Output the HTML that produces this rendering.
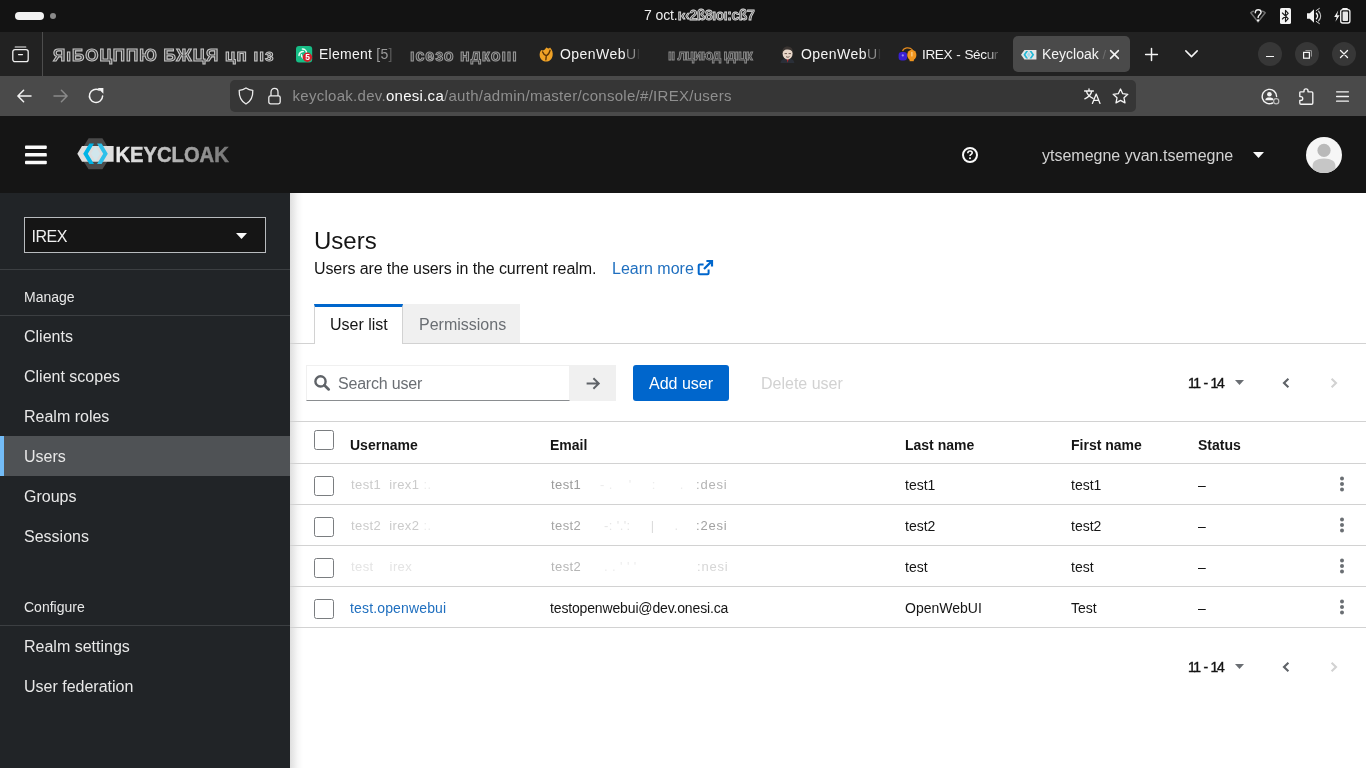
<!DOCTYPE html>
<html lang="en">
<head>
<meta charset="utf-8">
<title>Keycloak Administration Console</title>
<style>
*{box-sizing:border-box;margin:0;padding:0}
html,body{width:1366px;height:768px;overflow:hidden;background:#fff;font-family:"Liberation Sans",sans-serif;}
body{position:relative}
.abs{position:absolute}
#root{left:0;top:0;width:1366px;height:768px;will-change:transform}
svg{display:block;overflow:visible}
/* ---------- GNOME top bar ---------- */
#gnome{left:0;top:0;width:1366px;height:32px;background:#131313}
#gnome .pill{left:15px;top:12px;width:29px;height:8px;border-radius:4px;background:#f2f2f2}
#gnome .dot{left:50px;top:13px;width:6px;height:6px;border-radius:3px;background:#8a8a8a}
#clock{left:644px;top:7px;font-size:14px;color:#f0f0f0;white-space:nowrap;letter-spacing:-.1px}
/* ---------- Firefox tab bar ---------- */
#tabbar{left:0;top:32px;width:1366px;height:44px;background:#222222}
#tabsep{left:42px;top:32px;width:1px;height:44px;background:#4d4d4d}
.tab{top:37px;height:35px;color:#f4f4f4;font-size:14px;white-space:nowrap;line-height:35px}
.tabtxt{overflow:hidden}
#seltab{left:1013px;top:36px;width:117px;height:36px;border-radius:5px;background:#4a4a4a}
.wbtn{top:42px;width:24px;height:24px;border-radius:12px;background:#373737}
/* ---------- Firefox nav bar ---------- */
#navbar{left:0;top:76px;width:1366px;height:40px;background:#4a4a4a}
#urlbar{left:230px;top:80px;width:906px;height:32px;border-radius:5px;background:#363636}
#url{left:292.5px;top:87px;font-size:15px;color:#8f8f8f;white-space:nowrap;line-height:18px;letter-spacing:.28px}
/* ---------- Keycloak header ---------- */
#kchead{left:0;top:116px;width:1366px;height:77px;background:#151515}
#uname{left:1042px;top:147px;font-size:16px;line-height:18px;color:#d2d2d2;white-space:nowrap}
/* ---------- Sidebar ---------- */
#side{left:0;top:193px;width:290px;height:575px;background:#212427}
#realm{left:24px;top:217px;width:242px;height:36px;background:#151515;border:1px solid #b8bbbe}
#realm span{position:absolute;left:6.5px;top:9.5px;font-size:16px;line-height:18px;color:#f0f0f0;letter-spacing:-.5px}
.sdiv{left:0;width:290px;height:1px;background:#3c3f42}
.sec{left:24px;font-size:14px;line-height:16px;color:#e8e8e8;white-space:nowrap}
.nav{left:24px;font-size:16px;line-height:18px;color:#e8e8e8;white-space:nowrap}
#navsel{left:0;top:436px;width:290px;height:40px;background:#4f5255}
#navsel i{position:absolute;left:0;top:0;width:4px;height:40px;background:#73bcf7}
/* ---------- Content ---------- */
#main{left:290px;top:193px;width:1076px;height:575px;background:#fff}
#shadow{left:290px;top:193px;width:13px;height:575px;background:linear-gradient(90deg,rgba(3,3,3,.13),rgba(3,3,3,.03) 60%,rgba(3,3,3,0))}
h1{left:314px;top:227px;font-size:24px;line-height:28px;font-weight:400;color:#151515;white-space:nowrap}
#desc{left:314px;top:260px;font-size:16px;line-height:18px;color:#151515;white-space:nowrap;letter-spacing:-.1px}
#learn{left:612px;top:260px;font-size:16px;line-height:18px;color:#1f6fbf;white-space:nowrap}
#tabline{left:290px;top:343px;width:1076px;height:1px;background:#d2d2d2}
#t1{left:314px;top:304px;width:89px;height:40px;background:#fff;border-top:3px solid #0066cc;border-left:1px solid #d2d2d2;border-right:1px solid #d2d2d2}
#t2{left:403px;top:304px;width:117px;height:39px;background:#f0f0f0}
.ttxt{font-size:16px;line-height:18px;white-space:nowrap;top:316px}
#search{left:306px;top:365px;width:264px;height:36px;background:#fff;border:1px solid #f0f0f0;border-bottom:1px solid #8a8d90}
#sph{left:338px;top:375px;font-size:16px;line-height:18px;color:#6a6e73;white-space:nowrap;letter-spacing:-.2px}
#sbtn{left:570px;top:365px;width:46px;height:36px;background:#f0f0f0}
#add{left:633px;top:365px;width:96px;height:36px;background:#0066cc;border-radius:3px;color:#fff;font-size:16px;line-height:38px;text-align:center;white-space:nowrap}
#del{left:761px;top:375px;font-size:16px;line-height:18px;color:#d2d2d2;white-space:nowrap}
.pg{left:1188px;font-size:14px;line-height:16px;color:#151515;white-space:nowrap;font-weight:400;-webkit-text-stroke:.4px #151515;letter-spacing:-1.4px;word-spacing:1.3px}
.hl{left:290px;width:1076px;height:1px;background:#d2d2d2}
.th{font-size:14px;line-height:16px;font-weight:700;color:#151515;white-space:nowrap;top:437px}
.td{font-size:14px;line-height:16px;color:#151515;white-space:nowrap}
.cb{left:314px;width:20px;height:20px;border:1px solid #7a7d80;border-radius:2.5px;background:#fff}
.scr{color:#5a5a5a;-webkit-text-stroke:.8px #dcdcdc;letter-spacing:-.45px;font-weight:700;filter:blur(.4px)}
.scr1{color:#3c3c3c;-webkit-text-stroke:1.1px #c6c6c6;font-weight:700;font-size:17px;filter:blur(.45px);letter-spacing:1px;line-height:37px}
.scr2{color:#333;-webkit-text-stroke:1px #9c9c9c;font-weight:700;font-size:16px;filter:blur(.5px);letter-spacing:1px;line-height:37px}
.scr3{color:#303030;-webkit-text-stroke:.9px #8c8c8c;font-weight:700;font-size:14px;filter:blur(.5px);letter-spacing:-.75px;line-height:36px}
.rd{font-size:13px;line-height:16px;white-space:nowrap;filter:blur(.35px);letter-spacing:.4px}
</style>
</head>
<body>
<div id="root" class="abs">
<!-- GNOME top bar -->
<div id="gnome" class="abs">
  <div class="pill abs"></div><div class="dot abs"></div>
  <div id="clock" class="abs">7 oct.<span class="scr">&#305;&#8249;&#8249;2&#223;8&#305;o&#305;:c&#223;7</span></div>
  <!-- wifi ? -->
  <svg class="abs" style="left:1250px;top:9px" width="16" height="14" viewBox="0 0 16 14">
    <path d="M3.4 2.2 C2.2 2.6 1.4 3.1 0.8 3.7 L8 12.9 L15.2 3.7 C14.6 3.1 13.8 2.6 12.6 2.2" fill="none" stroke="#707070" stroke-width="1.5" stroke-linejoin="round" stroke-linecap="round"/>
    <path d="M5.3 3.7 C5.3 1.5 6.8 0.7 8.2 0.7 C10 0.7 11.1 1.8 11.1 3.2 C11.1 5.4 8.1 5.6 8.1 8.6" fill="none" stroke="#f2f2f2" stroke-width="1.45" stroke-linecap="round"/>
    <circle cx="8.1" cy="11.4" r="1.15" fill="#f2f2f2"/>
  </svg>
  <!-- bluetooth -->
  <svg class="abs" style="left:1280px;top:8px" width="11" height="16" viewBox="0 0 11 16">
    <rect x="0" y="0" width="11" height="16" rx="1.6" fill="#f4f4f4"/>
    <path d="M2.4 5 L8.2 10.6 L5.5 13.6 L5.5 2.4 L8.2 5.4 L2.4 11" fill="none" stroke="#1c1c1c" stroke-width="1.15" stroke-linejoin="round" stroke-linecap="round"/>
  </svg>
  <!-- volume -->
  <svg class="abs" style="left:1307px;top:8px" width="16" height="16" viewBox="0 0 16 16">
    <path d="M0 5.2 H2.8 L7 1.2 V14.8 L2.8 10.8 H0 Z" fill="#f2f2f2"/>
    <path d="M9.4 5.2 C10.8 6.8 10.8 9.2 9.4 10.8" fill="none" stroke="#f2f2f2" stroke-width="1.3" stroke-linecap="round"/>
    <path d="M11.6 3.2 C14.2 6 14.2 10 11.6 12.8" fill="none" stroke="#bdbdbd" stroke-width="1.3" stroke-linecap="round"/>
    <path d="M9.2 2.6 L12.4 0.4 M9.2 13.4 L12.4 15.6" fill="none" stroke="#d8d8d8" stroke-width="1" stroke-linecap="round"/>
  </svg>
  <!-- battery charging -->
  <svg class="abs" style="left:1334px;top:8px" width="17" height="16" viewBox="0 0 17 16">
    <path d="M4.2 2.4 L0.2 9 H2.7 L1.4 13.8 L5.6 7.2 H3.1 Z" fill="#f4f4f4"/>
    <rect x="8.2" y="0" width="5.6" height="2" rx="0.8" fill="#f2f2f2"/>
    <rect x="6.7" y="1.6" width="9.2" height="13.4" rx="2" fill="none" stroke="#f2f2f2" stroke-width="1.3"/>
    <rect x="8.6" y="3.6" width="5.4" height="9.4" rx="0.8" fill="#e6e6e6"/>
  </svg>
</div>
<!-- Tab bar -->
<div id="tabbar" class="abs"></div>
<div id="tabsep" class="abs"></div>
<!-- firefox view icon -->
<svg class="abs" style="left:12px;top:46px" width="17" height="17" viewBox="0 0 17 17">
  <path d="M3.2 1 H13.8" stroke="#f0f0f0" stroke-width="1.2" fill="none" stroke-linecap="round"/>
  <rect x="0.8" y="3.6" width="15.4" height="12" rx="2.2" fill="none" stroke="#f0f0f0" stroke-width="1.3"/>
  <path d="M6.6 8.6 H10.4" stroke="#f0f0f0" stroke-width="1.4" fill="none" stroke-linecap="round"/>
</svg>
<!-- tab 1 (scrambled title) -->
<div class="tab abs scr1" style="left:53px;width:224px">&#1071;&#305;&#1041;&#1054;&#1062;&#1055;&#1055;&#1070; &#1041;&#1046;&#1062;&#1071; &#1094;&#1087; &#305;&#305;&#1079;</div>
<!-- tab 2 Element -->
<svg class="abs" style="left:296px;top:46px" width="17" height="17" viewBox="0 0 17 17">
  <rect x="0" y="0" width="16.2" height="16.4" rx="3" fill="#17bd86"/>
  <path d="M6.4 3 A4.2 4.2 0 0 1 10.6 7.2 M3 9.6 A4.2 4.2 0 0 1 7.2 5.4 M9.6 13 A4.2 4.2 0 0 1 5.4 8.8" fill="none" stroke="#eafff7" stroke-width="1.5" stroke-linecap="round"/>
  <circle cx="11.4" cy="11.2" r="4.7" fill="#d4202c"/>
  <text x="11.5" y="14.3" font-family="Liberation Sans, sans-serif" font-size="8.4" font-weight="700" fill="#fff" text-anchor="middle">5</text>
</svg>
<div class="tab abs" style="left:319px;letter-spacing:.25px">Element <span style="color:#9a9a9a">[5</span><span style="color:#5c5c5c">]</span></div>
<!-- tab 3 (scrambled) -->
<div class="tab abs scr2" style="left:410px;width:110px">&#305;c&#1077;&#1079;&#1086; &#1085;&#1076;&#1082;&#1086;&#305;&#305;&#305;</div>
<!-- tab 4 OpenWebUI -->
<svg class="abs" style="left:538.5px;top:47px" width="14.5" height="15.5" viewBox="0 0 16 17">
  <path d="M8 0.6 C10 2 11.2 1.6 12.2 0.4 C14.8 3 15.6 6.4 15 9.6 C14.2 13.6 11.4 16 8 16 C4.4 16 1.4 13.6 0.8 9.8 C0.4 7 1.2 4.6 2.8 3.2 C4 4.4 6.4 3.6 8 0.6 Z" fill="#f0a226"/>
  <path d="M4 5.4 C5 8 6.6 9 8 9.6 M12.2 3.6 C11.4 7 9.6 8.8 8 9.6 L7.6 14" fill="none" stroke="#5a3206" stroke-width="1.5" stroke-linecap="round"/>
</svg>
<div class="tab abs" style="left:560px;letter-spacing:.45px">OpenWeb<span style="color:#8c8c8c">U</span><span style="color:#3a3a3a">I</span></div>
<!-- tab 5 (scrambled) -->
<div class="tab abs scr3" style="left:668px;width:86px">&#305;&#305; &#1083;&#1094;&#1080;&#1102;&#1076; &#305;&#1076;&#305;&#1094;&#1082;</div>
<!-- tab 6 OpenWebUI (face icon) -->
<svg class="abs" style="left:780px;top:46px" width="15" height="17" viewBox="0 0 15 17">
  <path d="M0.5 17 C1 13.6 3.4 12.6 7.4 12.6 C11.4 12.6 13.8 13.6 14.4 17 Z" fill="#2a2f38"/>
  <path d="M6.6 12.8 L7.6 16.8 L8.8 12.8 Z" fill="#b3262b"/>
  <ellipse cx="7.6" cy="7.4" rx="5" ry="6" fill="#e6d5c8"/>
  <path d="M2.4 7.2 C1.6 2.6 4.6 0.2 7.8 0.4 C11.2 0.6 13.4 3 12.8 6.6 C11.8 4.4 9.6 3.2 6.6 3.6 C4.4 3.8 3 5.2 2.4 7.2 Z" fill="#3b3532"/>
  <path d="M5 7.6 H6.6 M9 7.6 H10.6 M6.4 10.8 C7.2 11.4 8.4 11.4 9.2 10.8" fill="none" stroke="#5a463d" stroke-width="0.9" stroke-linecap="round"/>
</svg>
<div class="tab abs" style="left:801px;letter-spacing:.45px">OpenWeb<span style="color:#8c8c8c">U</span><span style="color:#3a3a3a">I</span></div>
<!-- tab 7 IREX -->
<svg class="abs" style="left:898px;top:46px" width="19" height="16" viewBox="0 0 19 16">
  <path d="M4.6 5.2 C5.4 1.4 11.6 0.6 14.6 4" fill="none" stroke="#e58a1c" stroke-width="1.1"/>
  <rect x="0.6" y="6" width="8.4" height="8.6" rx="3" fill="#3a1fd1"/>
  <circle cx="4.8" cy="9.4" r="1.1" fill="#9a8cf0"/>
  <ellipse cx="13.8" cy="9" rx="4.6" ry="5.2" fill="#f0951f"/>
  <rect x="11.6" y="12.6" width="4.2" height="2.6" fill="#f0951f"/>
  <path d="M13.9 6.4 V10" stroke="#ffd9a0" stroke-width="1.1" stroke-linecap="round"/>
</svg>
<div class="tab abs" style="left:922px;font-size:13.5px;word-spacing:.7px;letter-spacing:-.35px">IREX - S&#233;c<span style="color:#a8a8a8">u</span><span style="color:#666">r</span></div>
<!-- selected tab Keycloak -->
<div id="seltab" class="abs"></div>
<svg class="abs" style="left:1021px;top:49.5px" width="16" height="9.5" viewBox="0 0 17 12" preserveAspectRatio="none">
  <path d="M3.6 0 H16.4 V12 H3.6 L0 6 Z" fill="#e4e4e4"/>
  <path d="M5.4 1.2 L2.6 6 L5.4 10.8 H7.6 L4.8 6 L7.6 1.2 Z" fill="#22b8d6"/>
  <path d="M11.2 1.2 L14 6 L11.2 10.8 H9 L11.8 6 L9 1.2 Z" fill="#22b8d6"/>
  <path d="M8.3 2.6 L6.4 6 L8.3 9.4 L10.2 6 Z" fill="#9fdcf0"/>
</svg>
<div class="tab abs" style="left:1042px">Keycloak<span style="color:#6e6e6e;font-size:13px"> /</span></div>
<svg class="abs" style="left:1110px;top:50px" width="9" height="9" viewBox="0 0 9 9"><path d="M0.6 0.6 L8.4 8.4 M8.4 0.6 L0.6 8.4" stroke="#f6f6f6" stroke-width="1.5" stroke-linecap="round"/></svg>
<!-- new tab / list all -->
<svg class="abs" style="left:1145px;top:48px" width="13" height="13" viewBox="0 0 13 13"><path d="M6.5 0.6 V12.4 M0.6 6.5 H12.4" stroke="#f6f6f6" stroke-width="1.5" stroke-linecap="round"/></svg>
<svg class="abs" style="left:1185px;top:50px" width="13" height="8" viewBox="0 0 13 8"><path d="M0.8 0.9 L6.5 6.6 L12.2 0.9" fill="none" stroke="#f6f6f6" stroke-width="1.5" stroke-linecap="round" stroke-linejoin="round"/></svg>
<!-- window buttons -->
<div class="wbtn abs" style="left:1258px"></div>
<div class="wbtn abs" style="left:1295px"></div>
<div class="wbtn abs" style="left:1332px"></div>
<div class="abs" style="left:1266px;top:56px;width:8px;height:1.3px;background:#f6f6f6"></div>
<svg class="abs" style="left:1303px;top:50px" width="9" height="9" viewBox="0 0 9 9">
  <path d="M2.4 0.6 H8.4 V6.6" fill="none" stroke="#9a9a9a" stroke-width="1"/>
  <rect x="0.6" y="2.4" width="5.8" height="5.8" fill="none" stroke="#f6f6f6" stroke-width="1.2"/>
</svg>
<svg class="abs" style="left:1340px;top:50px" width="8" height="8" viewBox="0 0 8 8"><path d="M0.5 0.5 L7.5 7.5 M7.5 0.5 L0.5 7.5" stroke="#f6f6f6" stroke-width="1.3" stroke-linecap="round"/></svg>
<!-- Nav bar -->
<div id="navbar" class="abs"></div>
<div id="urlbar" class="abs"></div>
<div id="url" class="abs">keycloak.dev.<span style="color:#fbfbfb">onesi.ca</span>/auth/admin/master/console/#/IREX/users</div>
<!-- nav buttons -->
<svg class="abs" style="left:17px;top:89px" width="15" height="14" viewBox="0 0 15 14"><path d="M14 7 H1.4 M6.6 1.2 L0.9 7 L6.6 12.8" fill="none" stroke="#f4f4f4" stroke-width="1.5" stroke-linecap="round" stroke-linejoin="round"/></svg>
<svg class="abs" style="left:53px;top:89px" width="15" height="14" viewBox="0 0 15 14"><path d="M1 7 H13.6 M8.4 1.2 L14.1 7 L8.4 12.8" fill="none" stroke="#8a8a8a" stroke-width="1.5" stroke-linecap="round" stroke-linejoin="round"/></svg>
<svg class="abs" style="left:88px;top:87px" width="17" height="17" viewBox="0 0 17 17">
  <path d="M14.6 9 A6.6 6.6 0 1 1 11.2 3.1" fill="none" stroke="#f4f4f4" stroke-width="1.5" stroke-linecap="round"/>
  <path d="M9.6 1 H15.4 V6.8 Z" fill="#f4f4f4"/>
</svg>
<!-- url bar icons -->
<svg class="abs" style="left:238px;top:87px" width="16" height="18" viewBox="0 0 16 18">
  <path d="M8 1 C10 2.4 12.4 3.2 14.8 3.4 C15 9.4 13 14.2 8 17 C3 14.2 1 9.4 1.2 3.4 C3.6 3.2 6 2.4 8 1 Z" fill="none" stroke="#ececec" stroke-width="1.3" stroke-linejoin="round"/>
</svg>
<svg class="abs" style="left:268px;top:87px" width="13" height="18" viewBox="0 0 13 18">
  <path d="M3 9 V5.2 C3 2.8 4.6 1.4 6.5 1.4 C8.4 1.4 10 2.8 10 5.2 V9" fill="none" stroke="#ececec" stroke-width="1.3"/>
  <rect x="0.8" y="8.8" width="11.4" height="8" rx="1.8" fill="none" stroke="#ececec" stroke-width="1.3"/>
</svg>
<!-- translate -->
<svg class="abs" style="left:1084px;top:88px" width="17" height="16" viewBox="0 0 17 16">
  <path d="M0.6 3 H9.4 M5 0.8 V3 M7.8 3 C7 6.6 4.4 9.4 0.8 10.8 M2.4 3.2 C3.2 6.4 5.4 9 9 10.4" fill="none" stroke="#f4f4f4" stroke-width="1.3" stroke-linecap="round"/>
  <path d="M8.4 15.4 L12.2 6 L16 15.4 M9.8 12.4 H14.6" fill="none" stroke="#f4f4f4" stroke-width="1.3" stroke-linecap="round" stroke-linejoin="round"/>
</svg>
<!-- star -->
<svg class="abs" style="left:1112px;top:88px" width="17" height="16" viewBox="0 0 17 16">
  <path d="M8.5 1 L10.7 5.7 L15.8 6.3 L12 9.8 L13 14.9 L8.5 12.4 L4 14.9 L5 9.8 L1.2 6.3 L6.3 5.7 Z" fill="none" stroke="#f4f4f4" stroke-width="1.3" stroke-linejoin="round"/>
</svg>
<!-- account -->
<svg class="abs" style="left:1261px;top:88px" width="19" height="17" viewBox="0 0 19 17">
  <path d="M11.6 15 A7.2 7.2 0 1 1 15.6 8.6" fill="none" stroke="#f4f4f4" stroke-width="1.4" stroke-linecap="round"/>
  <circle cx="8.4" cy="6.2" r="2.3" fill="#f4f4f4"/>
  <path d="M4.2 12.2 C4.6 10 6.2 9.6 8.4 9.6 C10.6 9.6 12.2 10 12.6 12.2 Z" fill="#f4f4f4"/>
  <circle cx="15.2" cy="13.2" r="2.6" fill="#4a4a4a" stroke="#bdbdbd" stroke-width="1.2"/>
</svg>
<!-- extensions -->
<svg class="abs" style="left:1299px;top:88px" width="15" height="17" viewBox="0 0 15 17">
  <path d="M5 3.8 V2.8 C5 0.2 9 0.2 9 2.8 V3.8 H12.6 C13.4 3.8 13.8 4.2 13.8 5 V15 C13.8 15.8 13.4 16.2 12.6 16.2 H2 C1.2 16.2 0.8 15.8 0.8 15 V12.4 H1.8 C4.4 12.4 4.4 8.6 1.8 8.6 H0.8 V5 C0.8 4.2 1.2 3.8 2 3.8 Z" fill="none" stroke="#f4f4f4" stroke-width="1.35" stroke-linejoin="round"/>
</svg>
<!-- app menu -->
<svg class="abs" style="left:1336px;top:91px" width="13" height="11" viewBox="0 0 13 11"><path d="M0.6 0.8 H12.4 M0.6 5.5 H12.4 M0.6 10.2 H12.4" stroke="#f4f4f4" stroke-width="1.3" stroke-linecap="round"/></svg>
<!-- Keycloak header -->
<div id="kchead" class="abs"></div>
<!-- hamburger -->
<svg class="abs" style="left:25px;top:145px" width="22" height="20" viewBox="0 0 22 20"><rect x="0" y="0.5" width="21.8" height="3.5" rx=".9" fill="#fafafa"/><rect x="0" y="8.1" width="21.8" height="3.5" rx=".9" fill="#fafafa"/><rect x="0" y="15.7" width="21.8" height="3.5" rx=".9" fill="#fafafa"/></svg>
<!-- keycloak logo -->
<svg class="abs" style="left:77px;top:138px" width="153" height="32" viewBox="0 0 153 32">
  <defs><linearGradient id="kcg" x1="0" x2="1" y1="0" y2="0"><stop offset="0" stop-color="#ececec"/><stop offset=".45" stop-color="#bdbdbd"/><stop offset="1" stop-color="#747474"/></linearGradient></defs>
  <path d="M11.6 0.2 H25.4 L32.6 12 V20 L25.4 31.2 H11.6 L4.4 20 V12 Z" fill="#4a4a4a"/>
  <path d="M5 8 H36.6 V23.7 H5 L0.3 15.8 Z" fill="#dedede"/>
  <path d="M12.4 5.6 L6.2 15.8 L12.4 26 H17 L10.8 15.8 L17 5.6 Z" fill="#00b4e6"/>
  <path d="M24.6 5.6 L30.8 15.8 L24.6 26 H20 L26.2 15.8 L20 5.6 Z" fill="#2fc0ea"/>
  <path d="M18.5 8 L14 15.8 L18.5 23.6 L23 15.8 Z" fill="#c9ecf7" opacity=".55"/>
  <text x="38.4" y="23.7" font-family="Liberation Sans, sans-serif" font-weight="700" font-size="21.6" fill="url(#kcg)" stroke="url(#kcg)" stroke-width=".5" textLength="113.4" lengthAdjust="spacingAndGlyphs">KEYCLOAK</text>
</svg>
<!-- help -->
<svg class="abs" style="left:961px;top:146px" width="18" height="18" viewBox="0 0 18 18">
  <circle cx="9" cy="9" r="7" fill="none" stroke="#fafafa" stroke-width="2"/>
  <path d="M6.8 7.2 C6.8 5.6 7.8 5 9 5 C10.4 5 11.2 5.8 11.2 6.8 C11.2 8.4 9 8.2 9 10" fill="none" stroke="#fafafa" stroke-width="1.6"/>
  <circle cx="9" cy="12.2" r="1" fill="#fafafa"/>
</svg>
<!-- user caret -->
<svg class="abs" style="left:1253px;top:152px" width="11" height="6" viewBox="0 0 11 6"><path d="M0 0 H11 L5.5 6 Z" fill="#fafafa"/></svg>
<!-- avatar -->
<svg class="abs" style="left:1306px;top:137px" width="36" height="36" viewBox="0 0 36 36">
  <defs><clipPath id="avc"><circle cx="18" cy="18" r="18"/></clipPath></defs>
  <circle cx="18" cy="18" r="18" fill="#f6f6f6"/>
  <g clip-path="url(#avc)">
    <circle cx="18" cy="13.4" r="6.6" fill="#b9b9b9"/>
    <path d="M6.6 36 V29 C6.6 24.4 10.6 21.6 18 21.6 C25.4 21.6 29.4 24.4 29.4 29 V36 Z" fill="#c6c6c6"/>
  </g>
</svg>
<div id="uname" class="abs">ytsemegne yvan.tsemegne</div>
<!-- Sidebar -->
<div id="side" class="abs"></div>
<div id="realm" class="abs"><span>IREX</span></div>
<svg class="abs" style="left:236px;top:233px" width="11" height="6" viewBox="0 0 11 6"><path d="M0 0 H11 L5.5 6 Z" fill="#fafafa"/></svg>
<div class="sdiv abs" style="top:269px"></div>
<div class="sec abs" style="top:289px">Manage</div>
<div class="sdiv abs" style="top:315px"></div>
<div id="navsel" class="abs"><i></i></div>
<div class="nav abs" style="top:328px">Clients</div>
<div class="nav abs" style="top:368px">Client scopes</div>
<div class="nav abs" style="top:408px">Realm roles</div>
<div class="nav abs" style="top:448px">Users</div>
<div class="nav abs" style="top:488px">Groups</div>
<div class="nav abs" style="top:528px">Sessions</div>
<div class="sec abs" style="top:599px">Configure</div>
<div class="sdiv abs" style="top:625px"></div>
<div class="nav abs" style="top:638px">Realm settings</div>
<div class="nav abs" style="top:678px">User federation</div>
<!-- Content -->
<div id="main" class="abs"></div>
<div id="shadow" class="abs"></div>
<h1 class="abs">Users</h1>
<div id="desc" class="abs">Users are the users in the current realm.</div>
<div id="learn" class="abs">Learn more</div>
<svg class="abs" style="left:697px;top:260px" width="16" height="16" viewBox="0 0 16 16">
  <path d="M11.6 9.4 V13.2 C11.6 13.9 11.2 14.3 10.5 14.3 H2.8 C2.1 14.3 1.7 13.9 1.7 13.2 V5.5 C1.7 4.8 2.1 4.4 2.8 4.4 H6.6" fill="none" stroke="#0066cc" stroke-width="2" stroke-linecap="butt"/>
  <path d="M9.4 1 H15 V6.6 M14.6 1.4 L7 9" fill="none" stroke="#0066cc" stroke-width="2.2" stroke-linejoin="miter"/>
</svg>
<div id="tabline" class="abs"></div>
<div id="t2" class="abs"></div>
<div id="t1" class="abs"></div>
<div class="ttxt abs" style="left:330px;color:#151515">User list</div>
<div class="ttxt abs" style="left:419px;color:#6a6e73">Permissions</div>
<div id="search" class="abs"></div>
<div id="sph" class="abs">Search user</div>
<div id="sbtn" class="abs"></div>
<svg class="abs" style="left:314px;top:375px" width="16" height="16" viewBox="0 0 16 16">
  <circle cx="6.5" cy="6.4" r="5.1" fill="none" stroke="#5f6368" stroke-width="2.4"/>
  <path d="M10.4 10.3 L14.7 14.4" stroke="#5f6368" stroke-width="2.7" stroke-linecap="round"/>
</svg>
<svg class="abs" style="left:586px;top:377px" width="14" height="13" viewBox="0 0 14 13"><path d="M0.6 6.5 H12.4 M7.4 1.2 L12.8 6.5 L7.4 11.8" fill="none" stroke="#5f6368" stroke-width="1.9" stroke-linecap="butt" stroke-linejoin="miter"/></svg>
<div id="add" class="abs">Add user</div>
<div id="del" class="abs">Delete user</div>
<div class="pg abs" style="top:375px">11 - 14</div>
<div class="pg abs" style="top:659px">11 - 14</div>
<svg class="abs" style="left:1235px;top:380px" width="9" height="5" viewBox="0 0 9 5"><path d="M0 0 H9 L4.5 5 Z" fill="#6a6e73"/></svg>
<svg class="abs" style="left:1282px;top:378px" width="8" height="10" viewBox="0 0 8 10"><path d="M6.4 0.8 L2 5 L6.4 9.2" fill="none" stroke="#5f6368" stroke-width="2.1"/></svg>
<svg class="abs" style="left:1330px;top:378px" width="8" height="10" viewBox="0 0 8 10"><path d="M1.6 0.8 L6 5 L1.6 9.2" fill="none" stroke="#d2d2d2" stroke-width="2.1"/></svg>
<svg class="abs" style="left:1235px;top:664px" width="9" height="5" viewBox="0 0 9 5"><path d="M0 0 H9 L4.5 5 Z" fill="#6a6e73"/></svg>
<svg class="abs" style="left:1282px;top:662px" width="8" height="10" viewBox="0 0 8 10"><path d="M6.4 0.8 L2 5 L6.4 9.2" fill="none" stroke="#5f6368" stroke-width="2.1"/></svg>
<svg class="abs" style="left:1330px;top:662px" width="8" height="10" viewBox="0 0 8 10"><path d="M1.6 0.8 L6 5 L1.6 9.2" fill="none" stroke="#d2d2d2" stroke-width="2.1"/></svg>
<!-- Table -->
<div class="hl abs" style="top:421px"></div>
<div class="hl abs" style="top:463px"></div>
<div class="hl abs" style="top:504px"></div>
<div class="hl abs" style="top:545px"></div>
<div class="hl abs" style="top:586px"></div>
<div class="hl abs" style="top:627px"></div>
<div class="cb abs" style="top:430px"></div>
<div class="cb abs" style="top:476px"></div>
<div class="cb abs" style="top:517px"></div>
<div class="cb abs" style="top:558px"></div>
<div class="cb abs" style="top:599px"></div>
<div class="th abs" style="left:350px">Username</div>
<div class="th abs" style="left:550px">Email</div>
<div class="th abs" style="left:905px">Last name</div>
<div class="th abs" style="left:1071px">First name</div>
<div class="th abs" style="left:1198px">Status</div>
<div class="td abs" style="left:905px;top:477px">test1</div>
<div class="td abs" style="left:1071px;top:477px">test1</div>
<div class="td abs" style="left:1198px;top:477px">&#8211;</div>
<div class="td abs" style="left:905px;top:518px">test2</div>
<div class="td abs" style="left:1071px;top:518px">test2</div>
<div class="td abs" style="left:1198px;top:518px">&#8211;</div>
<div class="td abs" style="left:905px;top:559px">test</div>
<div class="td abs" style="left:1071px;top:559px">test</div>
<div class="td abs" style="left:1198px;top:559px">&#8211;</div>
<div class="rd abs" style="left:351px;top:477px;color:#cbcbcb">test1&nbsp;&nbsp;irex1&nbsp;<span style="color:#ececec">:.</span></div>
<div class="rd abs" style="left:551px;top:477px;color:#9c9c9c">test1</div>
<div class="rd abs" style="left:600px;top:477px;color:#ececec">-&nbsp;.&nbsp;&nbsp;&nbsp;&nbsp;&#39;&nbsp;&nbsp;&nbsp;&nbsp;&nbsp;:&nbsp;&nbsp;&nbsp;&nbsp;&nbsp;&nbsp;.</div>
<div class="rd abs" style="left:696px;top:477px;color:#b4b4b4;letter-spacing:.8px">:desi</div>
<div class="rd abs" style="left:351px;top:518px;color:#cbcbcb">test2&nbsp;&nbsp;irex2&nbsp;<span style="color:#ececec">:.</span></div>
<div class="rd abs" style="left:551px;top:518px;color:#a6a6a6">test2</div>
<div class="rd abs" style="left:600px;top:518px;color:#e6e6e6">&nbsp;-:&nbsp;&#39;.&#39;:&nbsp;&nbsp;&nbsp;&nbsp;&nbsp;<span style="color:#dcdcdc">|</span>&nbsp;&nbsp;&nbsp;&nbsp;&nbsp;.</div>
<div class="rd abs" style="left:696px;top:518px;color:#a2a2a2;letter-spacing:.8px">:2esi</div>
<div class="rd abs" style="left:351px;top:559px;color:#e4e4e4">test&nbsp;&nbsp;&nbsp;&nbsp;irex</div>
<div class="rd abs" style="left:551px;top:559px;color:#b6b6b6">test2</div>
<div class="rd abs" style="left:600px;top:559px;color:#ededed">&nbsp;.&nbsp;.&nbsp;&#39;&nbsp;&#39;&nbsp;&#39;&nbsp;</div>
<div class="rd abs" style="left:697px;top:559px;color:#d6d6d6;letter-spacing:.8px">:nesi</div>
<div class="td abs" style="left:350px;top:600px;color:#1f6fbf;letter-spacing:.15px">test.openwebui</div>
<div class="td abs" style="left:550px;top:600px;letter-spacing:-.15px">testopenwebui@dev.onesi.ca</div>
<div class="td abs" style="left:905px;top:600px">OpenWebUI</div>
<div class="td abs" style="left:1071px;top:600px">Test</div>
<div class="td abs" style="left:1198px;top:600px">&#8211;</div>
<svg class="abs" style="left:1340px;top:476px" width="4" height="16" viewBox="0 0 4 16"><circle cx="2" cy="2.4" r="2" fill="#6a6e73"/><circle cx="2" cy="8" r="2" fill="#6a6e73"/><circle cx="2" cy="13.6" r="2" fill="#6a6e73"/></svg>
<svg class="abs" style="left:1340px;top:517px" width="4" height="16" viewBox="0 0 4 16"><circle cx="2" cy="2.4" r="2" fill="#6a6e73"/><circle cx="2" cy="8" r="2" fill="#6a6e73"/><circle cx="2" cy="13.6" r="2" fill="#6a6e73"/></svg>
<svg class="abs" style="left:1340px;top:558px" width="4" height="16" viewBox="0 0 4 16"><circle cx="2" cy="2.4" r="2" fill="#6a6e73"/><circle cx="2" cy="8" r="2" fill="#6a6e73"/><circle cx="2" cy="13.6" r="2" fill="#6a6e73"/></svg>
<svg class="abs" style="left:1340px;top:599px" width="4" height="16" viewBox="0 0 4 16"><circle cx="2" cy="2.4" r="2" fill="#6a6e73"/><circle cx="2" cy="8" r="2" fill="#6a6e73"/><circle cx="2" cy="13.6" r="2" fill="#6a6e73"/></svg>
</div>
</body>
</html>
